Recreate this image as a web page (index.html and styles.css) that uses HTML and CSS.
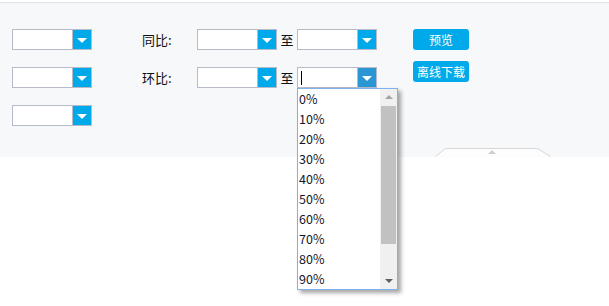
FILE: index.html
```html
<!DOCTYPE html>
<html>
<head>
    <title>同比环比</title>
    <link rel="stylesheet" href="styles.css">
</head>
<body>
    <div class="panel">
        <div class="col-left">
            <div class="combo"><span class="field"></span><span class="btn"></span></div>
            <div class="combo"><span class="field"></span><span class="btn"></span></div>
            <div class="combo"><span class="field"></span><span class="btn"></span></div>
        </div>

        <div class="col-mid">
            <div class="row">
                <span class="label">同比:</span>
                <div class="combo"><span class="field"></span><span class="btn"></span></div>
                <span class="to">至</span>
                <div class="combo"><span class="field"></span><span class="btn"></span></div>
            </div>
            <div class="row">
                <span class="label">环比:</span>
                <div class="combo"><span class="field"></span><span class="btn"></span></div>
                <span class="to">至</span>
                <div class="combo open">
                    <span class="field"><span class="caret"></span></span><span class="btn"></span>
                    <div class="dropdown">
                        <ul class="options">
                            <li>0%</li>
                            <li>10%</li>
                            <li>20%</li>
                            <li>30%</li>
                            <li>40%</li>
                            <li>50%</li>
                            <li>60%</li>
                            <li>70%</li>
                            <li>80%</li>
                            <li>90%</li>
                        </ul>
                        <div class="scrollbar">
                            <span class="arrow up"></span>
                            <span class="thumb"></span>
                            <span class="track"></span>
                            <span class="arrow down"></span>
                        </div>
                    </div>
                </div>
            </div>
        </div>

        <div class="col-right">
            <button class="action">预览</button>
            <button class="action">离线下载</button>
        </div>

        <svg class="handle" width="116" height="9" viewBox="0 0 116 9">
            <path d="M0.5 8.5 L10.5 0.5 L102.5 0.5 L115.5 8.5" fill="#fdfdfd" stroke="#d6d6d6"/>
            <path d="M53 6 L57 2 L61 6 Z" fill="#cfcfcf"/>
        </svg>
    </div>
    <div class="content"></div>
</body>
</html>
```

FILE: styles.css
```css
body {
    margin: 0;
    padding-top: 2px;
    font-family: "Noto Sans CJK SC", "Liberation Sans", sans-serif;
    font-size: 13px;
    color: #111;
    background: #fff;
}
.panel {
    position: relative;
    z-index: 2;
    height: 155px;
    box-sizing: border-box;
    border-top: 1px solid #e2e2e2;
    background: #f7f8fa;
    padding: 26px 0 0 12px;
    display: flex;
}
.content {
    height: 149px;
    background: #fff;
}
.col-left {
    display: flex;
    flex-direction: column;
    gap: 17px;
    width: 80px;
}
.col-mid {
    margin-left: 50px;
    display: flex;
    flex-direction: column;
    gap: 17px;
}
.row {
    display: flex;
    align-items: center;
    height: 21px;
}
.label {
    width: 55px;
}
.to {
    width: 20px;
    text-align: center;
}
.combo {
    position: relative;
    display: flex;
    width: 80px;
    height: 21px;
    box-sizing: border-box;
    border: 1px solid #b6bac9;
    background: #fff;
}
.field {
    flex: 1;
    display: flex;
    align-items: center;
    padding-left: 3px;
}
.caret {
    width: 1px;
    height: 14px;
    background: #000;
}
.btn {
    position: relative;
    width: 18px;
    border-left: 1px solid #b6bac9;
    background: #00a9ea;
}
.btn::after {
    content: "";
    position: absolute;
    left: 4px;
    top: 8px;
    border-left: 5px solid transparent;
    border-right: 5px solid transparent;
    border-top: 5px solid #fff;
}
.open .btn {
    background: #2a97d4;
}
.dropdown {
    position: absolute;
    left: -1px;
    top: 20px;
    width: 101px;
    height: 202px;
    box-sizing: border-box;
    border: 1px solid #7db3ea;
    background: #fff;
    box-shadow: 3px 3px 4px rgba(0, 0, 0, 0.35);
    display: flex;
    z-index: 5;
}
.options {
    list-style: none;
    margin: 0;
    padding: 0;
    flex: 1;
}
.options li {
    height: 20px;
    line-height: 20px;
    padding-left: 1px;
    font-size: 12.5px;
    color: #14142a;
}
.scrollbar {
    width: 17px;
    background: #f0f0f0;
    display: flex;
    flex-direction: column;
    align-items: center;
}
.arrow {
    height: 17px;
    width: 17px;
    position: relative;
    flex: none;
}
.arrow::after {
    content: "";
    position: absolute;
    left: 5px;
    border-left: 4px solid transparent;
    border-right: 4px solid transparent;
}
.arrow.up::after {
    top: 6px;
    border-bottom: 4px solid #a3a3a3;
}
.arrow.down::after {
    top: 7px;
    border-top: 4px solid #606060;
}
.thumb {
    width: 15px;
    height: 138px;
    background: #c1c1c1;
    flex: none;
}
.track {
    flex: 1;
}
.col-right {
    margin-left: 36px;
    display: flex;
    flex-direction: column;
    gap: 11px;
}
.action {
    width: 56px;
    height: 21px;
    padding: 0;
    border: none;
    border-radius: 3px;
    background: #00aaea;
    color: #fff;
    font-family: inherit;
    font-size: 12px;
    line-height: 21px;
}
.handle {
    position: absolute;
    left: 435px;
    bottom: 0;
    display: block;
}
```
